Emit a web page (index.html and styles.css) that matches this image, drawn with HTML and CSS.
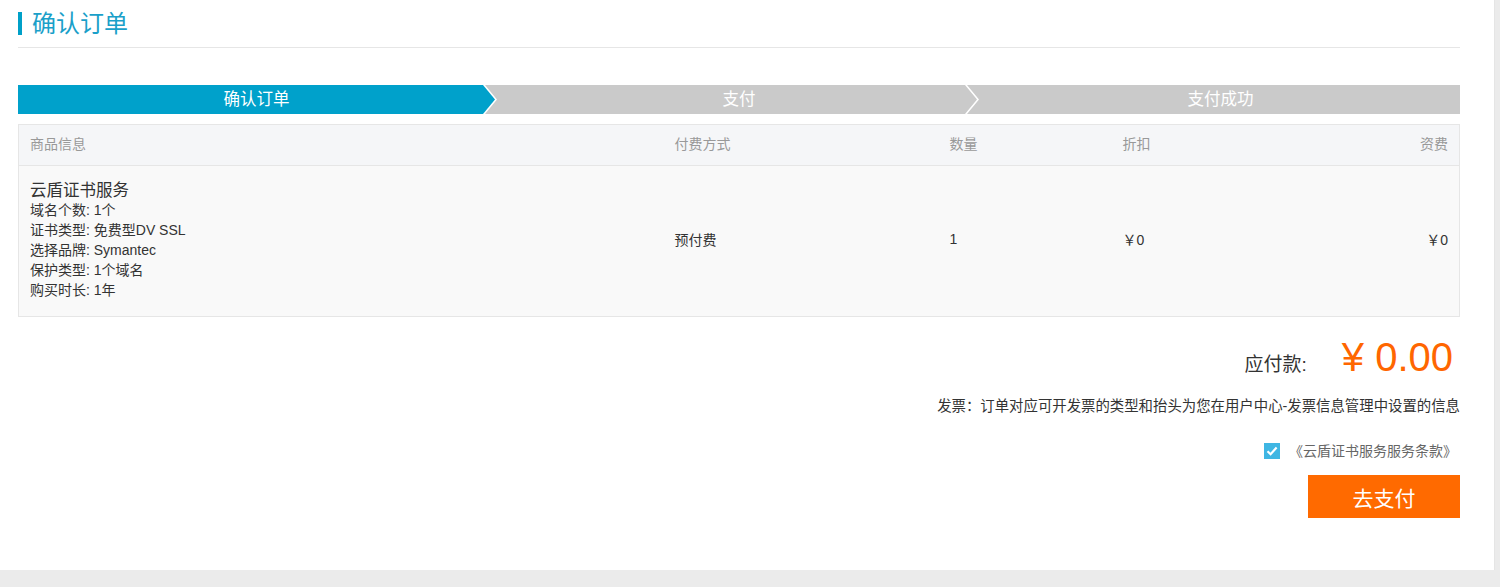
FILE: index.html
```html
<!DOCTYPE html>
<html>
	<head>
		<meta charset="UTF-8">
		<title>确认订单</title>
		<link rel="stylesheet" href="styles.css">
	</head>
	<body>
		<div class="panel">
			<h2 class="title"><span class="bar"></span>确认订单</h2>

			<div class="steps">
				<div class="step first active">确认订单</div>
				<div class="step middle">支付</div>
				<div class="step last">支付成功</div>
			</div>

			<table class="order">
				<colgroup>
					<col class="c1"><col class="c2"><col class="c3"><col class="c4"><col class="c5">
				</colgroup>
				<thead>
					<tr>
						<th>商品信息</th>
						<th>付费方式</th>
						<th>数量</th>
						<th>折扣</th>
						<th class="right">资费</th>
					</tr>
				</thead>
				<tbody>
					<tr>
						<td class="product">
							<div class="name">云盾证书服务</div>
							<div>域名个数: 1个</div>
							<div>证书类型: 免费型DV SSL</div>
							<div>选择品牌: Symantec</div>
							<div>保护类型: 1个域名</div>
							<div>购买时长: 1年</div>
						</td>
						<td>预付费</td>
						<td>1</td>
						<td>￥0</td>
						<td class="right">￥0</td>
					</tr>
				</tbody>
			</table>

			<div class="total">
				<span class="label">应付款:</span>
				<span class="amount">¥ 0.00</span>
			</div>
			<p class="invoice">发票：订单对应可开发票的类型和抬头为您在用户中心-发票信息管理中设置的信息</p>
			<label class="agree">
				<svg width="16" height="16" viewBox="0 0 16 16"><rect width="16" height="16" fill="#3fb6e3"/><path d="M3.5 8.2 L6.6 11.2 L12.6 4.6" fill="none" stroke="#fff" stroke-width="2.2"/></svg>
				<span>《云盾证书服务服务条款》</span>
			</label>
			<div class="actions">
				<button class="pay">去支付</button>
			</div>
		</div>
		<div class="footer"></div>
	</body>
</html>
```

FILE: styles.css
```css
body { margin: 0; background: #ebebeb; font-family: "Liberation Sans", "Noto Sans CJK SC", sans-serif; color: #333; }
.panel { width: 1442px; height: 570px; padding: 0 34px 0 18px; background: #fff; border-right: 1px solid #e5e5e5; overflow: hidden; }
.footer { height: 17px; }

.title { margin: 0; padding-top: 9px; height: 38px; display: flex; align-items: flex-start; font-size: 24px; font-weight: normal; line-height: 30px; color: #1aa0c9; border-bottom: 1px solid #e6e6e6; }
.title .bar { width: 4px; height: 23px; margin: 3px 10px 0 0; background: #00a0c8; }

.steps { display: flex; margin-top: 37px; height: 29px; }
.step { margin-left: -10px; background: #cacaca; color: #fff; font-size: 16.5px; line-height: 28px; text-align: center;
	clip-path: polygon(0 0, calc(100% - 12px) 0, 100% 50%, calc(100% - 12px) 100%, 0 100%, 12px 50%); }
.step.first { width: 477px; margin-left: 0; clip-path: polygon(0 0, calc(100% - 12px) 0, 100% 50%, calc(100% - 12px) 100%, 0 100%); }
.step.middle { width: 476px; padding-left: 16px; }
.step.last { flex: 1; padding-left: 14px; clip-path: polygon(0 0, 100% 0, 100% 100%, 0 100%, 12px 50%); }
.step.active { background: #00a1cb; }

.order { width: 100%; margin-top: 10px; border-collapse: collapse; border: 1px solid #e6e6e6; font-size: 14px; table-layout: fixed; }
.order .c1 { width: 645px; } .order .c2 { width: 275px; } .order .c3 { width: 173px; } .order .c4 { width: 189px; }
.order th { height: 35px; padding: 0 11px 5px; text-align: left; font-weight: normal; color: #999; background: #f5f6f8; border-bottom: 1px solid #e6e6e6; }
.order td { padding: 0 11px 4px; background: #f9f9f9; color: #333; vertical-align: middle; }
.order .right { text-align: right; }
.order .product { padding: 14px 11px 16px; line-height: 20px; }
.order .product .name { font-size: 16.5px; }

.total { margin-top: 16px; height: 48px; display: flex; justify-content: flex-end; align-items: baseline; padding-right: 7px; }
.total .label { font-size: 19px; color: #333; margin-right: 35px; }
.total .amount { font-size: 40px; line-height: 48px; color: #ff6600; }

.invoice { margin: 15px 0 0; font-size: 14.4px; line-height: 20px; text-align: right; }
.agree { display: flex; justify-content: flex-end; align-items: center; gap: 9px; margin-top: 25px; padding-right: 3px; font-size: 14px; line-height: 20px; color: #666; }
.actions { display: flex; justify-content: flex-end; margin-top: 14px; }
.pay { width: 152px; height: 43px; border: 0; background: #ff6a00; color: #fff; font-family: inherit; font-size: 21px; }
```
